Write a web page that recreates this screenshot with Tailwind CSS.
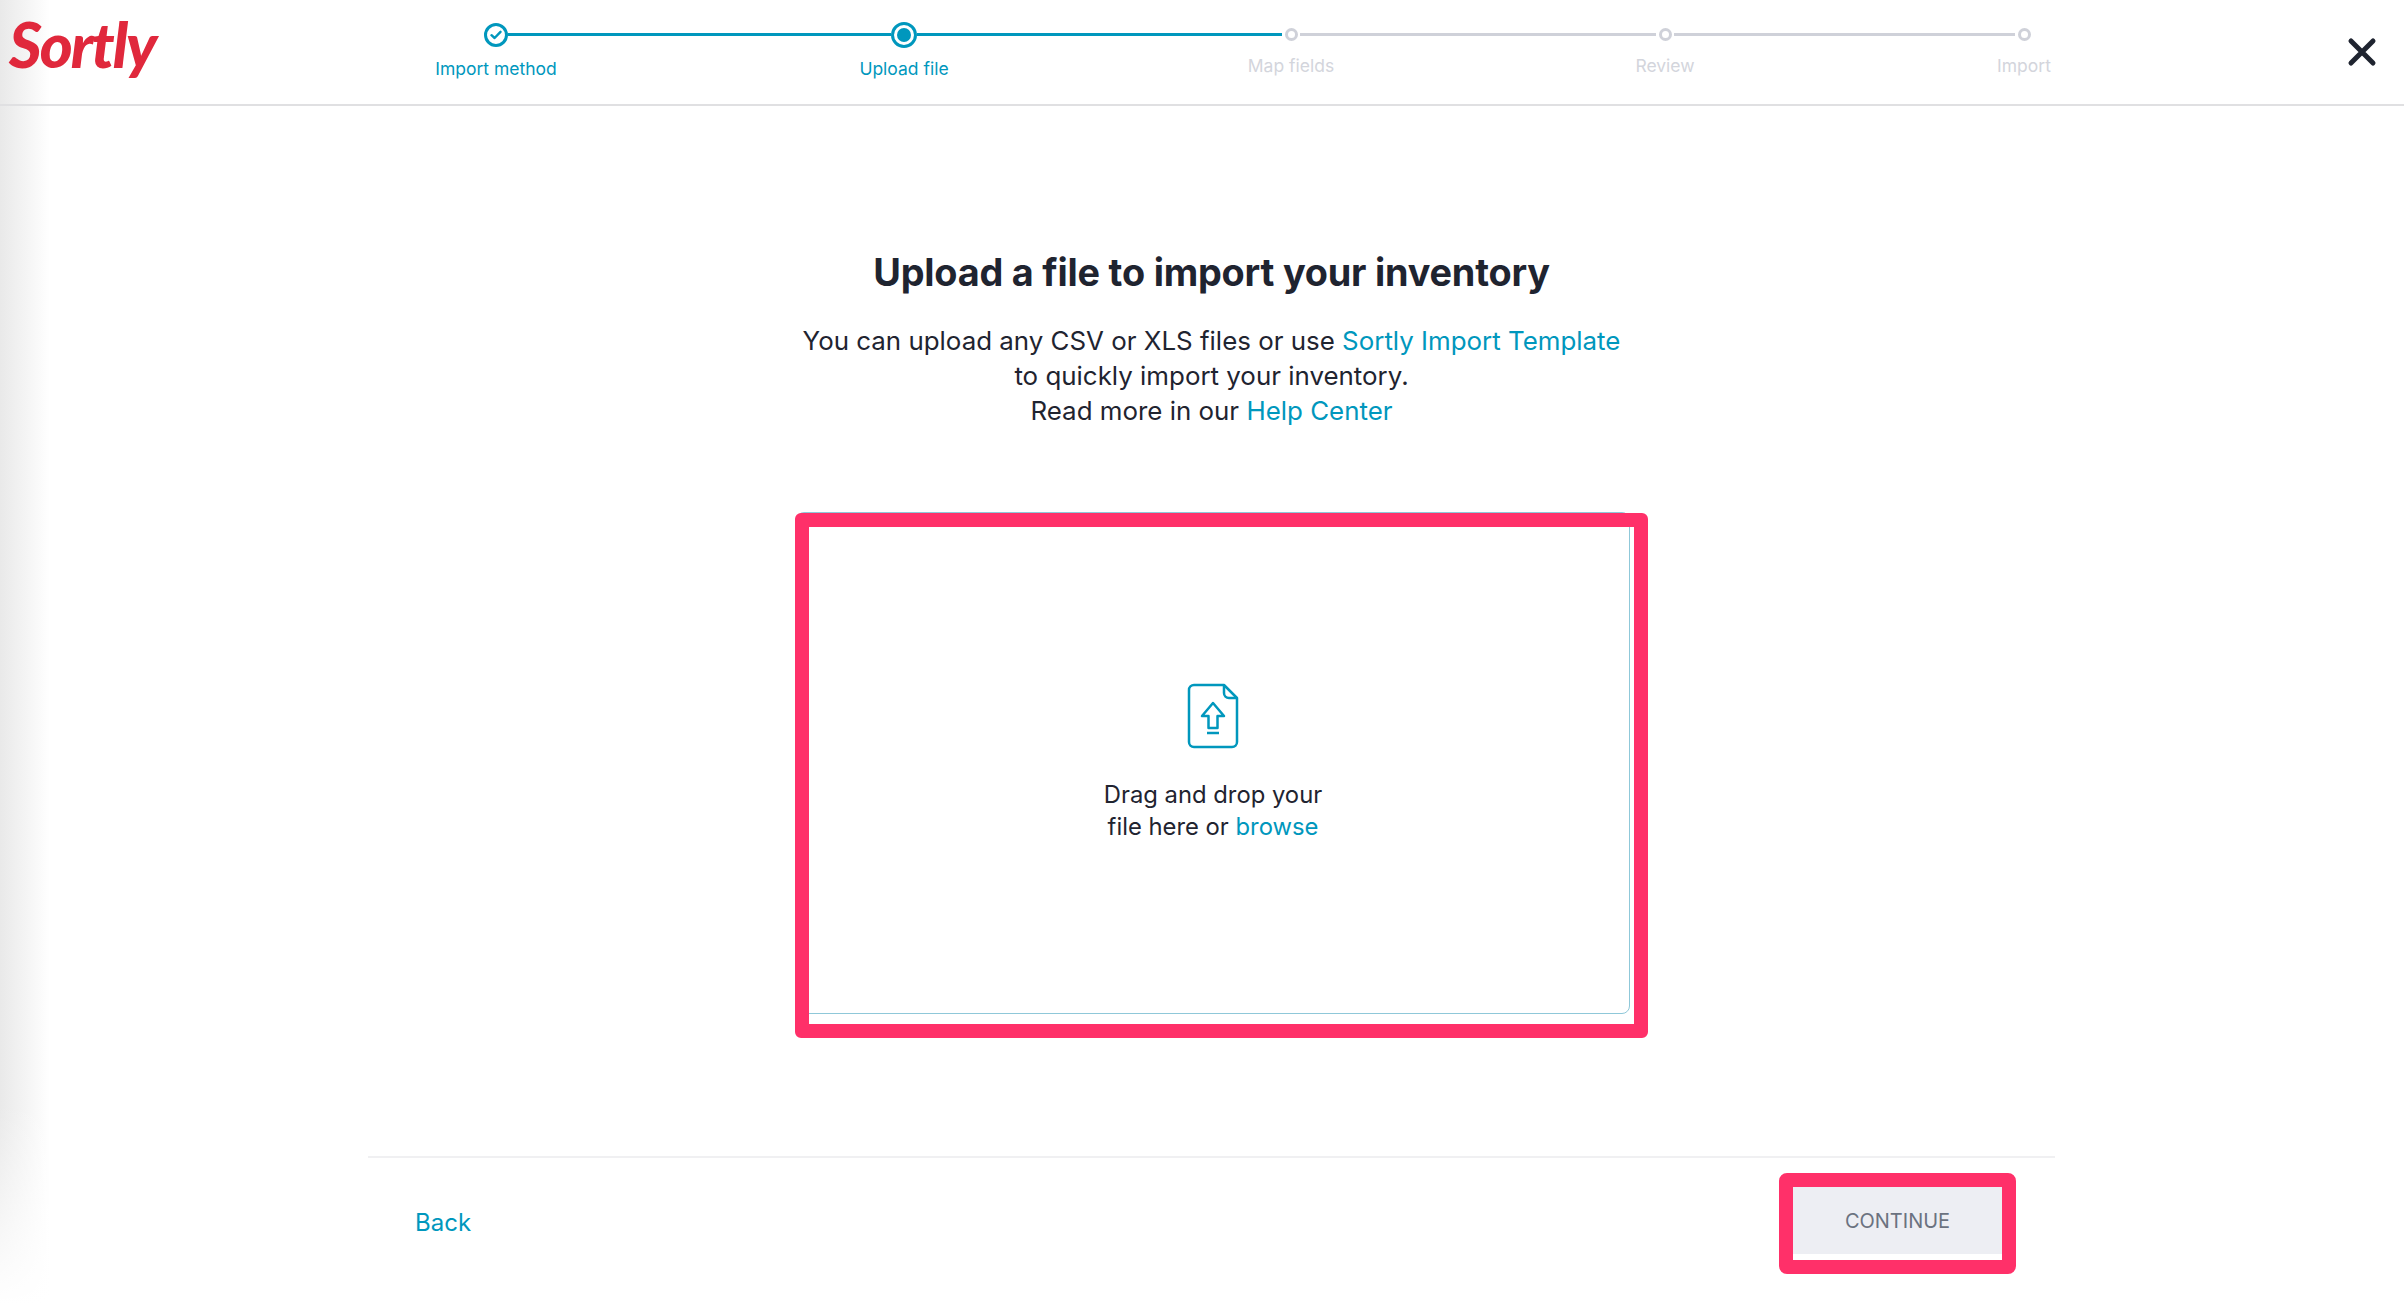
<!DOCTYPE html>
<html lang="en">
<head>
  <meta charset="UTF-8">
  <title>Sortly | Upload file</title>
  <script src="https://cdn.jsdelivr.net/npm/@tailwindcss/browser@4"></script>
</head>
<body class="bg-white font-[Inter,sans-serif] text-[#1f2430]">
  <div class="relative w-[2404px] h-[1304px] overflow-hidden">
    <!-- soft shadow down the left edge -->
    <div class="absolute left-0 top-0 w-[50px] h-full bg-linear-to-r from-[#e9e9e9] to-white"></div>
    <div class="absolute left-0 bottom-0 w-[50px] h-[200px] bg-linear-to-b from-white/0 to-white"></div>

    <div class="relative flex flex-col h-full">
      <!-- header -->
      <header class="h-[106px] border-b-2 border-[#e0e0e2] flex">
        <div class="w-[484px] pl-[9px] pt-[4px] shrink-0">
          <span class="block text-[#e0283c] text-[63px] leading-[80px] font-black italic tracking-[-2px] font-[Lato,sans-serif]">Sortly</span>
        </div>

        <!-- stepper -->
        <div class="flex items-start pt-[23px]">
          <div class="w-[24px] flex flex-col items-center">
            <div class="w-[24px] h-[24px] rounded-full border-[3px] border-[#0097bd] flex items-center justify-center">
              <svg width="12" height="10" viewBox="0 0 12 10" fill="none" stroke="#0097bd" stroke-width="2.4" stroke-linecap="round" stroke-linejoin="round"><path d="M1.5 5.2 4.6 8 10.5 1.8"/></svg>
            </div>
            <span class="mt-[10px] whitespace-nowrap text-[17.5px] leading-[24px] text-[#0097bd]">Import method</span>
          </div>
          <div class="w-[383px] h-[3px] mt-[10px] bg-[#0097bd]"></div>
          <div class="w-[26px] -mt-[1px] flex flex-col items-center">
            <div class="w-[26px] h-[26px] rounded-full border-[3px] border-[#0097bd] flex items-center justify-center">
              <div class="w-[14px] h-[14px] rounded-full bg-[#0097bd]"></div>
            </div>
            <span class="mt-[9px] whitespace-nowrap text-[17.5px] leading-[24px] text-[#0097bd]">Upload file</span>
          </div>
          <div class="w-[365px] h-[3px] mt-[10px] bg-[#0097bd]"></div>
          <div class="w-[12px] ml-[3px] mt-[5px] flex flex-col items-center">
            <div class="w-[13px] h-[13px] shrink-0 rounded-full border-[3px] border-[#cfd1d9]"></div>
            <span class="mt-[13px] whitespace-nowrap text-[17.5px] leading-[24px] text-[#d3d5dc]">Map fields</span>
          </div>
          <div class="w-[356px] h-[3px] ml-[3px] mt-[10px] bg-[#cfd1d9]"></div>
          <div class="w-[12px] ml-[3px] mt-[5px] flex flex-col items-center">
            <div class="w-[13px] h-[13px] shrink-0 rounded-full border-[3px] border-[#cfd1d9]"></div>
            <span class="mt-[13px] whitespace-nowrap text-[17.5px] leading-[24px] text-[#d3d5dc]">Review</span>
          </div>
          <div class="w-[341px] h-[3px] ml-[3px] mt-[10px] bg-[#cfd1d9]"></div>
          <div class="w-[12px] ml-[3px] mt-[5px] flex flex-col items-center">
            <div class="w-[13px] h-[13px] shrink-0 rounded-full border-[3px] border-[#cfd1d9]"></div>
            <span class="mt-[13px] whitespace-nowrap text-[17.5px] leading-[24px] text-[#d3d5dc]">Import</span>
          </div>
        </div>

        <div class="ml-[317px] pt-[37px]">
          <svg width="30" height="30" viewBox="0 0 30 30" fill="none" stroke="#1f2430" stroke-width="5" stroke-linecap="round"><path d="M4 4 26 26M26 4 4 26"/></svg>
        </div>
      </header>

      <!-- upload body -->
      <main class="w-[1687px] ml-[368px] flex flex-col items-center">
        <h1 class="mt-[144px] text-[37.8px] leading-[44px] font-bold tracking-[-0.2px]">Upload a file to import your inventory</h1>
        <p class="mt-[29px] text-[25.9px] leading-[35px] text-center">
          You can upload any CSV or XLS files or use <a class="text-[#0097bd]">Sortly Import Template</a><br>
          to quickly import your inventory.<br>
          Read more in our <a class="text-[#0097bd]">Help Center</a>
        </p>

        <div class="relative mt-[83.5px] ml-[3px] w-[834px] h-[502px]">
          <div class="w-full h-full rounded-[8px] border border-[#8fc8d9] flex flex-col items-center">
            <svg class="mt-[170px]" width="52" height="66" viewBox="0 0 52 66" fill="none" stroke="#0097bd" stroke-width="2.5" stroke-linejoin="round">
              <path d="M37 2H7a5 5 0 0 0-5 5v52a5 5 0 0 0 5 5h38a5 5 0 0 0 5-5V15Z"/>
              <path d="M37 2v8a5 5 0 0 0 5 5h8"/>
              <path d="M26 20 15 33h6.500v12h9V33H37Z"/>
              <path d="M20 50h12"/>
            </svg>
            <p class="mt-[30px] text-[23.8px] leading-[32px] text-center">Drag and drop your<br>file here or <a class="text-[#0097bd]">browse</a></p>
          </div>
          <!-- pink annotation box -->
          <div class="absolute -left-[1px] top-[1px] w-[853px] h-[525px] rounded-[6px] border-[14px] border-[#ff3069]"></div>
        </div>

        <!-- footer -->
        <div class="mt-[142px] w-full border-t-2 border-[#f0f0f2] flex items-start justify-between pl-[47px] pr-[53px]">
          <a class="mt-[47px] text-[24px] leading-[36px] text-[#0097bd]">Back</a>
          <div class="relative mt-[29px]">
            <button class="w-[209px] h-[67px] pt-[2px] bg-[#edeef3] text-[#6b7280] text-[20px]">CONTINUE</button>
            <div class="absolute -left-[14px] -top-[14px] w-[237px] h-[101px] rounded-[8px] border-[14px] border-[#ff3069]"></div>
          </div>
        </div>
      </main>
    </div>
  </div>
</body>
</html>
